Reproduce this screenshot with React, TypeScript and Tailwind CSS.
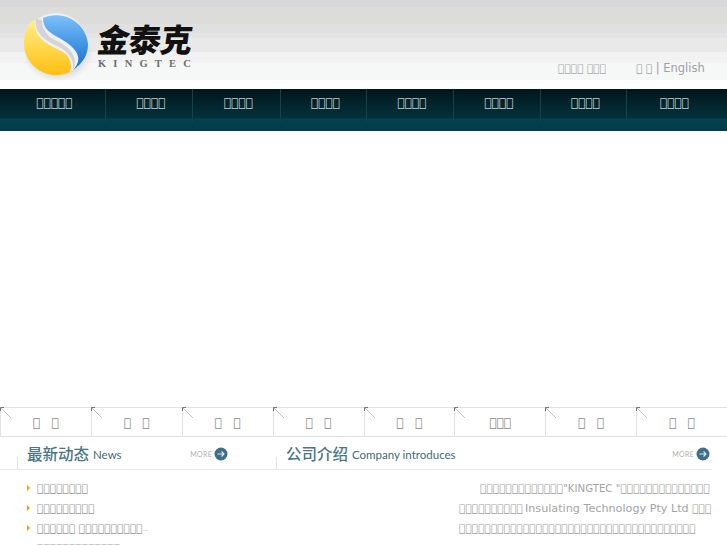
const T = '\uE000';
const box = (n: number) => T.repeat(n);

const NAV = [
  { label: box(5), w: 'w-[106px] pl-[4px]' },
  { label: box(4), w: 'w-[87px] pl-[4px]' },
  { label: box(4), w: 'w-[88px] pl-[4px]' },
  { label: box(4), w: 'w-[86px] pl-[4px]' },
  { label: box(4), w: 'w-[87px] pl-[4px]' },
  { label: box(4), w: 'w-[87px] pl-[4px]' },
  { label: box(4), w: 'w-[86px] pl-[4px]' },
  { label: box(4), w: 'flex-1 pr-[5px]' },
];

const PAIR = `${T}   ${T}`;
const TABS = [PAIR, PAIR, PAIR, PAIR, PAIR, box(3), PAIR, PAIR];

// S-shaped logo mark
function LogoMark() {
  return (
    <svg width="70" height="72" viewBox="0 0 70 72" className="shrink-0">
      <defs>
        <linearGradient id="blue" x1="0" y1="0" x2="0" y2="1">
          <stop offset="0" stopColor="#7cc0fb" />
          <stop offset="1" stopColor="#0f70cc" />
        </linearGradient>
        <linearGradient id="yellow" x1="0" y1="0" x2="0" y2="1">
          <stop offset="0" stopColor="#fff08a" />
          <stop offset="1" stopColor="#ffbe10" />
        </linearGradient>
        <radialGradient id="shade">
          <stop offset="0.6" stopColor="#bbbbbb" stopOpacity="0.7" />
          <stop offset="1" stopColor="#cccccc" stopOpacity="0" />
        </radialGradient>
      </defs>
      <ellipse cx="35" cy="43" rx="35" ry="28" fill="url(#shade)" />
      <circle cx="33" cy="33" r="31" fill="#f0f0f0" />
      <path d="M12 8 C3 14 1 24 1 33 A32 32 0 0 0 47 61 C50 50 45 43 36 39 C24 33 10 27 12 8 Z" fill="url(#yellow)" />
      <path d="M13 8 L19 9 C19 20 26 27 36 31 C50 38 55 49 50 59 C51 48 46 41 36 36 C22 29 11 23 13 8 Z" fill="#d4d4d7" />
      <path d="M20 7 A32 32 0 0 1 65 33 C65 44 60 52 50 59 C60 49 56 38 38 28 C27 22 20 18 20 7 Z" fill="url(#blue)" />
    </svg>
  );
}

function NavBar() {
  return (
    <div className="flex h-[42px] bg-[linear-gradient(#01151a_0px,#02323d_29px,#07444f_30px,#033f4d_31px,#023d4a_42px)]">
      {NAV.map((item, i) => (
        <div
          key={i}
          className={`${item.w} flex h-[33px] items-center justify-center border-r border-[#14414a] pb-[5px] text-[12px] text-[#c8d0d0] last:border-r-0`}
        >
          {item.label}
        </div>
      ))}
    </div>
  );
}

function TabCell({ label }: { label: string }) {
  return (
    <div className="relative flex flex-1 items-center justify-center border-l border-[#e2e2e2] pt-[1px] text-[12px] whitespace-pre text-[#8a8a8a]">
      {/* corner arrow */}
      <svg width="12" height="12" viewBox="0 0 12 12" className="absolute -top-px -left-px">
        <path d="M0.5 4 V0.5 H4" fill="none" stroke="#777" />
        <path d="M1 1 L11 11" stroke="#c4c4c4" />
      </svg>
      {label}
    </div>
  );
}

function SectionTitle({ cn, en }: { cn: string; en: string }) {
  return (
    <div className="flex items-end">
      <span className="text-[15.5px] leading-[20px] font-medium text-[#4a7582]" style={{ fontFamily: '"Noto Sans CJK SC", sans-serif' }}>
        {cn}
      </span>
      <span className="ml-[4px] font-['Lato',sans-serif] text-[11.5px] leading-[16px] text-[#3d6b7a]">{en}</span>
    </div>
  );
}

function More() {
  return (
    <div className="flex items-center gap-[2px] pt-[2px]">
      <span className="font-['Lato',sans-serif] text-[7px] tracking-[0.3px] text-[#b0b0b0] uppercase">more</span>
      <svg width="14" height="14" viewBox="0 0 14 14">
        <circle cx="7" cy="7" r="6.5" fill="#3f6f88" />
        <path d="M3.5 7 H10 M7.5 4.5 L10 7 L7.5 9.5" fill="none" stroke="#dfe8ec" strokeWidth="1.1" />
      </svg>
    </div>
  );
}

export default function App() {
  return (
    <div className="h-[545px] w-[727px] overflow-hidden bg-white font-['DejaVu_Sans',sans-serif]">
      {/* header */}
      <div className="h-[89px] bg-[linear-gradient(#d8d8d8_0px,#d8d8d8_7px,#dcdcda_7px,#dcdcda_24px,#e0e0e0_24px,#e0e0e0_33px,#e4e4e6_33px,#e4e4e6_38px,#e9e9e9_38px,#e9e9e9_52px,#f2f2f2_52px,#f2f2f2_63px,#f6f8f8_63px,#f6f8f8_80px,#ffffff_80px)]">
        <div className="flex h-full pt-[11px] pl-[23px]">
          <LogoMark />
          <div className="ml-[5px] flex w-[100px] flex-col pt-[9px]">
            <span className="origin-left skew-x-[-8deg] text-[32px] leading-[36px] font-black tracking-[-0.5px] whitespace-nowrap text-[#111]" style={{ fontFamily: '"Noto Sans CJK SC", sans-serif' }}>
              金泰克
            </span>
            <span className="mt-[2px] font-['Liberation_Serif',serif] text-[10.5px] leading-[12px] font-bold tracking-[7.2px] whitespace-nowrap text-[#6e6e6e]">KINGTEC</span>
          </div>
          <div className="ml-[360px] flex items-end pb-[12px] text-[10.67px] whitespace-pre text-[#a8a8a8]">
            <span>{`${box(4)} ${box(3)}`}</span>
            <span className="ml-[30px] text-[#a0a0a0]">
              {`${T} ${T} `}
              <span className="text-[11.5px]">| English</span>
            </span>
          </div>
        </div>
      </div>

      <NavBar />

      {/* empty banner area */}
      <div className="h-[276px]" />

      {/* tab strip */}
      <div className="flex h-[30px] border-y border-[#e2e2e2]">
        {TABS.map((t, i) => (
          <TabCell key={i} label={t} />
        ))}
      </div>

      {/* section headings */}
      <div className="mr-[15px] flex h-[33px] border-b border-[#e6e9ea]">
        <div className="relative flex w-[276px] items-center justify-between pr-[48px] pl-[27px]">
          <div className="absolute bottom-0 left-[17px] h-[12px] w-px bg-[#dfe3e4]" />
          <SectionTitle cn="最新动态" en="News" />
          <More />
        </div>
        <div className="relative flex flex-1 items-center justify-between pr-[2px] pl-[10px]">
          <div className="absolute bottom-0 left-0 h-[12px] w-px bg-[#dfe3e4]" />
          <SectionTitle cn="公司介绍" en="Company introduces" />
          <More />
        </div>
      </div>

      {/* content */}
      <div className="flex pt-[9px]">
        <ul className="w-[300px] pl-[27px] text-[10.67px] leading-[20px] text-[#9a9a9a]">
          {[box(8), box(9), `${box(6)} ${box(10)}`, box(13)].map((n, i) => (
            <li key={i} className="flex items-center whitespace-pre">
              {i < 3 && <span className="mr-[7px] h-0 w-0 -translate-y-[1px] border-y-[3px] border-l-[3px] border-y-transparent border-l-[#f59a1b]" />}
              {i === 3 && <span className="w-[10px]" />}
              {n}
              {i === 2 && <span className="text-[8px] text-[#bbb]">..</span>}
            </li>
          ))}
        </ul>
        <div className="ml-[159px] w-[253px] text-[10.67px] leading-[20px] text-[#a4a4a4]">
          <p className="whitespace-nowrap">
            <span className="inline-block w-[21px]" />
            {box(13)}
            <span className="text-[10.2px]">"KINGTEC "</span>
            {box(14)}
          </p>
          <p className="whitespace-nowrap">
            {box(10)}
            <span className="ml-[2px] text-[11.2px]">Insulating Technology Pty Ltd</span> {box(3)}
          </p>
          <p className="whitespace-nowrap">{box(37)}</p>
        </div>
      </div>
    </div>
  );
}
